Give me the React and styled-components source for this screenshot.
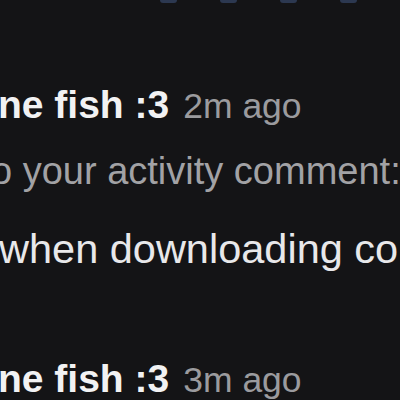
import React from "react";
import styled, { createGlobalStyle } from "styled-components";

const Global = createGlobalStyle`
  html, body { margin: 0; padding: 0; background: #141416; }
  body { font-family: "Liberation Sans", Arial, sans-serif; }
`;

const Screen = styled.div`
  width: 400px;
  height: 400px;
  overflow: hidden;
  background: #141416;
  display: flex;
  flex-direction: column;
`;

const TabStrip = styled.div`
  height: 3px;
  display: flex;
  gap: 43px;
  padding-left: 160px;
  flex-shrink: 0;
`;

const TabDot = styled.div`
  width: 17px;
  height: 3px;
  background: #2c3850;
  border-radius: 0 0 5px 5px;
`;

const List = styled.div`
  padding-top: 79px;
  display: flex;
  flex-direction: column;
  gap: 82px;
`;

const Item = styled.div`
  display: flex;
  flex-direction: column;
`;

const Header = styled.div`
  display: flex;
  align-items: baseline;
  gap: 14px;
  height: 46px;
  line-height: 46px;
  margin-left: -2px;
  white-space: nowrap;
`;

const Name = styled.span`
  font-size: 39px;
  font-weight: 700;
  color: #f2f2f3;
`;

const Time = styled.span`
  font-size: 35.5px;
  color: #9b9b9e;
`;

const Subtitle = styled.div`
  margin-top: 21px;
  margin-left: -9px;
  font-size: 38px;
  line-height: 44px;
  color: #a2a2a5;
  white-space: nowrap;
`;

const Body = styled.div`
  margin-top: 31px;
  margin-left: -1px;
  font-size: 41.5px;
  line-height: 50px;
  color: #e8e8ea;
  white-space: nowrap;
`;

const items = [
  {
    name: "ne fish :3",
    time: "2m ago",
    subtitle: "o your activity comment:",
    body: "when downloading co",
  },
  { name: "ne fish :3", time: "3m ago" },
];

export default function App() {
  return (
    <>
      <Global />
      <Screen>
        <TabStrip>
          <TabDot />
          <TabDot />
          <TabDot />
          <TabDot />
        </TabStrip>
        <List>
          {items.map((it, i) => (
            <Item key={i}>
              <Header>
                <Name>{it.name}</Name>
                <Time>{it.time}</Time>
              </Header>
              {it.subtitle && <Subtitle>{it.subtitle}</Subtitle>}
              {it.body && <Body>{it.body}</Body>}
            </Item>
          ))}
        </List>
      </Screen>
    </>
  );
}
